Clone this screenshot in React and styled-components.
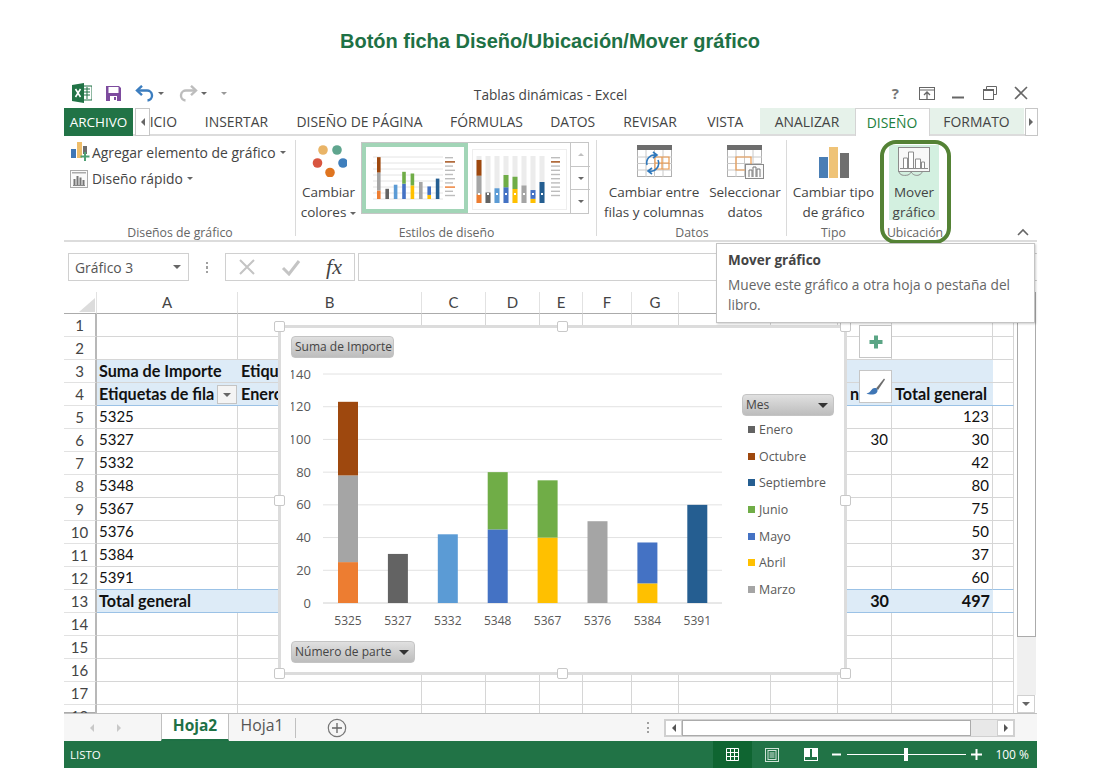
import React from 'react';
import styled, { createGlobalStyle } from 'styled-components';

const GREEN = '#217346';
const UI = '"Open Sans", "Noto Sans", sans-serif';
const CELL = 'Lato, "Open Sans", sans-serif';

const Global = createGlobalStyle`
  html, body { margin: 0; background: #fff; }
  * { box-sizing: border-box; }
`;

const Page = styled.div`
  width: 1100px;
  height: 780px;
  overflow: hidden;
  font-family: ${UI};
  color: #444;
`;
const Heading = styled.h1`
  margin: 0;
  height: 78px;
  padding-top: 28px;
  text-align: center;
  font: bold 20px/26px "Liberation Sans", Arial, sans-serif;
  color: #1e7145;
`;
const Win = styled.div`
  position: relative;
  width: 973px;
  margin-left: 64px;
`;

/* title bar */
const TitleBar = styled.div`
  height: 30px;
  display: flex;
  align-items: center;
  position: relative;
`;
const Quick = styled.div`
  display: flex;
  align-items: center;
  padding-left: 8px;
  flex: 1;
`;
const QuickGap = styled.span`
  width: ${p => p.$w}px;
  flex: none;
`;
const WinTitle = styled.div`
  position: absolute;
  left: 0;
  right: 0;
  top: 7px;
  text-align: center;
  font-size: 13.7px;
  color: #444;
`;
const WinButtons = styled.div`
  display: flex;
  align-items: center;
`;
const WinBtn = styled.div`
  width: 31.5px;
  display: flex;
  justify-content: center;
  align-items: center;
  font-size: 15px;
  font-weight: 700;
  color: #777;
`;

/* tabs */
const TabRow = styled.div`
  height: 28px;
  display: flex;
  border-bottom: 2px solid #dcdcdc;
`;
const Tab = styled.div`
  width: ${p => p.$w}px;
  height: ${p => (p.$active ? 28 : 26)}px;
  flex: none;
  display: flex;
  align-items: center;
  justify-content: center;
  font-size: 13.9px;
  white-space: nowrap;
  color: ${p => (p.$active ? '#1e7f3e' : '#444')};
  background: ${p => (p.$ctx ? '#e6f2ea' : '#fff')};
  position: relative;
  ${p => p.$active && 'border: 1px solid #d4d4d4; border-bottom: 0;'}
`;
const FileTab = styled.div`
  width: 69px;
  height: 28px;
  margin-right: 2px;
  flex: none;
  background: ${GREEN};
  color: #fff;
  font-size: 13.5px;
  display: flex;
  align-items: center;
  justify-content: center;
`;
const TabScroll = styled.div`
  width: ${p => p.$w}px;
  height: 28px;
  flex: none;
  margin-left: ${p => p.$ml || 0}px;
  background: #fff;
  border: 1px solid #c6c6c6;
  display: flex;
  align-items: center;
  justify-content: center;
`;
const Clipped = styled.div`
  width: 40.5px;
  flex: none;
  height: 26px;
  display: flex;
  align-items: center;
  font-size: 13.9px;
  color: #444;
  & > span {
    width: 27px;
    overflow: hidden;
    display: flex;
    justify-content: flex-end;
  }
`;

/* ribbon */
const Ribbon = styled.div`
  height: 106px;
  display: flex;
  border-bottom: 2px solid #dcdcdc;
  position: relative;
`;
const Group = styled.div`
  width: ${p => p.$w}px;
  flex: none;
  display: flex;
  flex-direction: column;
  position: relative;
  padding-top: 4px;
  &::after {
    content: '';
    position: absolute;
    right: 0;
    top: 4px;
    bottom: 4px;
    width: 1px;
    background: ${p => (p.$noline ? 'transparent' : '#dadada')};
  }
`;
const GroupBody = styled.div`
  flex: 1;
  display: flex;
  min-height: 0;
`;
const GroupLabel = styled.div`
  height: 16px;
  flex: none;
  text-align: center;
  font-size: 12.3px;
  line-height: 18px;
  color: #666;
`;
const SmallCmds = styled.div`
  display: flex;
  flex-direction: column;
  gap: 6px;
  padding: 2px 0 0 6px;
`;
const SmallCmd = styled.div`
  display: flex;
  align-items: center;
  gap: 2px;
  height: 20px;
  font-size: 13.9px;
  color: #444;
  white-space: nowrap;
`;
const Caret = styled.span`
  width: 0;
  height: 0;
  border-left: 3px solid transparent;
  border-right: 3px solid transparent;
  border-top: 3px solid #666;
  margin: ${p => p.$m || '0 0 0 4px'};
  display: inline-block;
  vertical-align: middle;
`;
const BigCmd = styled.div`
  width: ${p => p.$w}px;
  flex: none;
  margin-left: ${p => p.$ml || 0}px;
  display: flex;
  flex-direction: column;
  align-items: center;
  ${p => p.$on && 'background: #d3f0e0; height: 75px; margin-top: 5px;'}
`;
const IconSlot = styled.div`
  height: ${p => p.$h || 42}px;
  flex: none;
  display: flex;
  align-items: flex-start;
  justify-content: center;
  padding-top: ${p => p.$pt ?? 5}px;
`;
const BigText = styled.div`
  font-size: 13.5px;
  line-height: 20px;
  text-align: center;
  color: #444;
  white-space: nowrap;
`;
const Gallery = styled.div`
  width: 228px;
  height: 72px;
  margin-top: 2px;
  border: 1px solid #c6c6c6;
  display: flex;
  flex: none;
`;
const GalleryThumb = styled.div`
  width: ${p => p.$w}px;
  flex: none;
  margin-left: ${p => (p.$on ? 0 : 2)}px;
  border: ${p => (p.$on ? '4px solid #a2d5b7' : '2px solid #fff')};
  display: flex;
`;
const GalleryArrows = styled.div`
  margin-left: auto;
  width: 20px;
  flex: none;
  display: flex;
  flex-direction: column;
  border-left: 1px solid #c6c6c6;
`;
const GalleryArrow = styled.div`
  flex: 1;
  display: flex;
  align-items: center;
  justify-content: center;
  border-bottom: ${p => (p.$last ? 0 : '1px solid #c6c6c6')};
`;
const Highlight = styled.div`
  position: absolute;
  left: 0;
  top: 4px;
  width: 71px;
  height: 104px;
  border: 4px solid #548235;
  border-radius: 16px;
  z-index: 3;
  pointer-events: none;
`;
const Collapse = styled.div`
  position: absolute;
  right: 8px;
  bottom: 4px;
`;

/* formula bar */
const FormulaBar = styled.div`
  height: 50px;
  display: flex;
  align-items: flex-start;
  padding: 11px 0 0 4px;
`;
const NameBox = styled.div`
  width: 121px;
  height: 28px;
  border: 1px solid #d0d0d0;
  display: flex;
  align-items: center;
  justify-content: space-between;
  padding: 0 7px 0 6px;
  font-size: 13.9px;
  color: #555;
`;
const GripWrap = styled.div`
  width: 36px;
  height: 28px;
  display: flex;
  align-items: center;
  justify-content: center;
`;
const Grip = styled.span`
  width: 2px;
  height: 11px;
  background: repeating-linear-gradient(#a0a0a0 0 2px, transparent 2px 4.5px);
`;
const FxBox = styled.div`
  width: 130px;
  height: 28px;
  border: 1px solid #d0d0d0;
  display: flex;
  align-items: center;
  justify-content: space-between;
  padding: 0 12px;
`;
const FxGlyph = styled.span`
  font: italic 400 22px/26px "Liberation Serif", serif;
  color: #444;
`;
const FormulaInput = styled.div`
  flex: 1;
  height: 28px;
  margin-left: 3px;
  border: 1px solid #d0d0d0;
  border-right: 0;
`;

/* sheet */
const SheetRow = styled.div`
  height: 421px;
  display: flex;
  position: relative;
  overflow: hidden;
`;
const COLS = '33px 141px 184px 64px 54px 43px 49px 47px 92px 67px 54px 101px 21px';
const Grid = styled.div`
  width: 950px;
  flex: none;
  border-right: 1px solid #ababab;
  border-bottom: 1px solid #ababab;
`;
const Row = styled.div`
  display: grid;
  grid-template-columns: ${COLS};
  height: ${p => p.$h || 23}px;
`;
const ColHead = styled.div`
  border-right: 1px solid #e2e2e2;
  border-bottom: 1px solid #ababab;
  text-align: center;
  font: 15px/21px ${CELL};
  color: #444;
  overflow: hidden;
  position: relative;
`;
const Corner = styled.svg`
  position: absolute;
  right: 1px;
  bottom: 1px;
`;
const RowHead = styled.div`
  border-right: 2px solid #b8b8b8;
  border-bottom: 1px solid #e2e2e2;
  text-align: center;
  font: 15px/22px ${CELL};
  color: #444;
`;
const Cell = styled.div`
  border-right: ${p => (p.$band ? 0 : '1px solid #d6d6d6')};
  border-bottom: 1px solid ${p => (p.$blueline ? '#9bc2e6' : '#d6d6d6')};
  background: ${p => (p.$band ? '#ddebf7' : '#fff')};
  font: ${p => (p.$bold ? 'bold 16.2px' : 'normal 15px')}/21px ${CELL};
  color: #111;
  padding: 0 3px 0 ${p => p.$pl || 2}px;
  text-align: ${p => (p.$right ? 'right' : 'left')};
  white-space: nowrap;
  position: relative;
`;
const FilterBtn = styled.span`
  position: absolute;
  right: 1px;
  top: 2px;
  width: 20px;
  height: 19px;
  background: #f4f4f4;
  border: 1px solid #c4c4c4;
  display: flex;
  align-items: center;
  justify-content: center;
`;
const Chart = styled.div`
  position: absolute;
  left: 214px;
  top: 33px;
  width: 569px;
  height: 350px;
  background: #fff;
  border: 3px solid #dcdcdc;
  padding: 8px 0 0 10px;
  display: flex;
  flex-direction: column;
  align-items: flex-start;
  z-index: 1;
`;
const Handle = styled.span`
  position: absolute;
  width: 11px;
  height: 11px;
  background: #fff;
  border: 1px solid #c8c8c8;
  border-radius: 2px;
  left: calc(${p => p.$x}% + ${p => p.$x * 0.03 - 7}px);
  top: calc(${p => p.$y}% + ${p => p.$y * 0.03 - 7}px);
`;
const FieldBtn = styled.div`
  height: 22px;
  width: ${p => p.$w}px;
  flex: none;
  background: linear-gradient(#e0e0e0, #bdbdbd);
  border: 1px solid #c4c4c4;
  border-radius: 4px;
  font-size: 12px;
  line-height: 20px;
  color: #444;
  padding: 0 5px 0 3px;
  display: flex;
  align-items: center;
  justify-content: space-between;
  white-space: nowrap;
`;
const ChartBody = styled.div`
  width: 100%;
  height: 283px;
  display: flex;
  flex: none;
`;
const Legend = styled.div`
  margin: 36px 0 0 11px;
  width: 92px;
  flex: none;
`;
const LegendList = styled.div`
  padding-left: 6px;
`;
const LegendItem = styled.div`
  height: 26.7px;
  display: flex;
  align-items: center;
  gap: 4px;
  font-size: 12.4px;
  color: #595959;
  white-space: nowrap;
`;
const Swatch = styled.span`
  width: 7px;
  height: 7px;
  background: ${p => p.$c};
  flex: none;
`;
const ChartAction = styled.div`
  position: absolute;
  left: 795px;
  top: ${p => p.$top}px;
  width: 33px;
  height: 33px;
  background: #fff;
  border: 1px solid #c6c6c6;
  display: flex;
  align-items: center;
  justify-content: center;
  z-index: 1;
`;
const VScroll = styled.div`
  width: 23px;
  flex: none;
  display: flex;
  flex-direction: column;
  padding: 0 1px 0 3px;
  background: #fff;
`;
const VTrack = styled.div`
  flex: 1;
  background: #f0f0f0;
`;
const VThumb = styled.div`
  height: 345px;
  background: #fff;
  border: 1px solid #ababab;
`;
const ScrollBtn = styled.div`
  width: ${p => p.$w || 18}px;
  height: ${p => p.$h || 18}px;
  flex: none;
  background: #fff;
  border: 1px solid #d0d0d0;
  display: flex;
  align-items: center;
  justify-content: center;
`;

/* sheet tabs */
const SheetTabs = styled.div`
  height: 28px;
  background: #f6f6f6;
  display: flex;
  align-items: center;
  border-top: 1px solid #c0c0c0;
`;
const TabNav = styled.div`
  width: 97px;
  flex: none;
  display: flex;
  gap: 23px;
  padding-left: 26px;
`;
const SheetTab = styled.div`
  width: ${p => p.$w}px;
  height: 27px;
  flex: none;
  align-self: flex-start;
  text-align: center;
  font-size: ${p => (p.$on ? 15.5 : 15.8)}px;
  line-height: 23px;
  font-weight: ${p => (p.$on ? 700 : 400)};
  color: ${p => (p.$on ? '#1e7145' : '#555')};
  background: ${p => (p.$on ? '#fff' : 'transparent')};
  border-bottom: ${p => (p.$on ? '2px solid #1e7145' : 0)};
  border-right: ${p => (p.$on ? '1px solid #c0c0c0' : 0)};
  border-left: ${p => (p.$on ? '1px solid #c0c0c0' : 0)};
`;
const TabDivider = styled.div`
  width: 1px;
  height: 20px;
  background: #c0c0c0;
  flex: none;
`;
const NewSheet = styled.div`
  margin-left: 31px;
  display: flex;
`;
const SplitGrip = styled.div`
  margin-left: 300px;
  width: 17px;
  height: 11px;
  display: flex;
`;
const HScroll = styled.div`
  width: 351px;
  height: 18px;
  flex: none;
  display: flex;
  background: #e8e8e8;
  border: 1px solid #d0d0d0;
`;
const HThumb = styled.div`
  width: 289px;
  flex: none;
  background: #fff;
  border: 1px solid #ababab;
`;
const HSpace = styled.span`
  flex: 1;
`;

/* status */
const Status = styled.div`
  height: 27px;
  background: ${GREEN};
  color: #fff;
  display: flex;
  align-items: center;
  font-size: 11.5px;
  padding-left: 6px;
`;
const ViewBtns = styled.div`
  margin-left: auto;
  display: flex;
  align-self: stretch;
`;
const ViewBtn = styled.div`
  width: 39px;
  background: ${p => (p.$on ? '#0f6531' : 'transparent')};
  display: flex;
  align-items: center;
  justify-content: center;
`;
const Zoom = styled.div`
  display: flex;
  align-items: center;
  margin-left: 2px;
`;
const ZoomTrack = styled.div`
  width: 119px;
  height: 1px;
  background: #fff;
  margin: 0 5px;
  position: relative;
`;
const ZoomThumb = styled.span`
  position: absolute;
  left: 57px;
  top: -6px;
  width: 4px;
  height: 13px;
  background: #fff;
`;
const ZoomLabel = styled.div`
  width: 55px;
  text-align: right;
  padding-right: 8px;
  font-size: 12px;
`;

/* tooltip */
const Tip = styled.div`
  position: absolute;
  left: 652px;
  top: 165px;
  width: 319px;
  height: 80px;
  background: #fff;
  border: 1px solid #c4c4c4;
  box-shadow: 1px 1px 2px rgba(0, 0, 0, 0.2);
  padding: 6px 11px;
  z-index: 4;
`;
const TipTitle = styled.div`
  font-size: 13.5px;
  font-weight: 700;
  line-height: 20px;
  color: #444;
`;
const TipText = styled.div`
  margin-top: 5px;
  font-size: 13.7px;
  line-height: 20px;
  color: #666;
`;

/* data */
const SERIES = {
  ene: '#636363', oct: '#9e480e', sep: '#255e91', jun: '#70ad47',
  may: '#4472c4', abr: '#ffc000', mar: '#a5a5a5', feb: '#ed7d31', azul: '#5b9bd5',
};
const BARS = [
  { label: '5325', parts: [['feb', 25], ['mar', 53], ['oct', 45]] },
  { label: '5327', parts: [['ene', 30]] },
  { label: '5332', parts: [['azul', 42]] },
  { label: '5348', parts: [['may', 45], ['jun', 35]] },
  { label: '5367', parts: [['abr', 40], ['jun', 35]] },
  { label: '5376', parts: [['mar', 50]] },
  { label: '5384', parts: [['abr', 12], ['may', 25]] },
  { label: '5391', parts: [['sep', 60]] },
];
const LEGEND = [
  ['Enero', 'ene'], ['Octubre', 'oct'], ['Septiembre', 'sep'], ['Junio', 'jun'],
  ['Mayo', 'may'], ['Abril', 'abr'], ['Marzo', 'mar'],
];
// the letters after G sit under the tooltip
const LETTERS = ['', 'A', 'B', 'C', 'D', 'E', 'F', 'G', '', '', '', '', ''];
const TOTALS = { 5: '123', 6: '30', 7: '42', 8: '80', 9: '75', 10: '50', 11: '37', 12: '60', 13: '497' };
const PARTS = { 5: '5325', 6: '5327', 7: '5332', 8: '5348', 9: '5367', 10: '5376', 11: '5384', 12: '5391' };

const stack = (parts, base, scale, x, w) => {
  let v = 0;
  return parts.map(([key, n]) => {
    const y = base - (v + n) * scale;
    v += n;
    return <rect key={key + v} x={x} y={y} width={w} height={n * scale} fill={SERIES[key]} />;
  });
};

const PlotArea = () => {
  const base = 245;
  const k = 229 / 140;
  return (
    <svg width="440" height="283" style={{ flex: 'none', display: 'block' }}>
      {[0, 20, 40, 60, 80, 100, 120, 140].map(v => (
        <g key={v}>
          <line x1="32" x2="431" y1={base - v * k} y2={base - v * k} stroke={v ? '#e2e2e2' : '#d0d0d0'} />
          <text x="20" y={base - v * k + 4.5} textAnchor="end" fontSize="13" fill="#595959" fontFamily={UI}>{v}</text>
        </g>
      ))}
      {BARS.map((b, i) => {
        const cx = 57 + i * 49.9;
        return (
          <g key={b.label}>
            {stack(b.parts, base, k, cx - 10, 20)}
            <text x={cx} y={267} textAnchor="middle" fontSize="12" fill="#595959" fontFamily={UI}>{b.label}</text>
          </g>
        );
      })}
    </svg>
  );
};

const MiniChartA = () => (
  <svg width="97" height="64" style={{ display: 'block' }}>
    {[0, 1, 2, 3, 4, 5, 6, 7].map(i => (
      <line key={i} x1="7" x2="77" y1={52 - i * 6} y2={52 - i * 6} stroke="#e4e4e4" strokeWidth="1" />
    ))}
    {BARS.map((b, i) => <g key={b.label}>{stack(b.parts, 52, 0.34, 11 + i * 8.4, 3.6)}</g>)}
    {[0, 1, 2, 3, 4, 5, 6, 7, 8, 9].map(i => (
      <rect key={i} x="79" y={10 + i * 4.2} width={i % 2 ? 10 : 8} height="1.4" fill={i === 1 ? '#9e480e' : i === 7 ? '#ed7d31' : '#bdbdbd'} />
    ))}
  </svg>
);

const MiniChartB = () => (
  <svg width="96" height="66" style={{ display: 'block' }}>
    <rect x="0.5" y="4.5" width="94" height="60" fill="none" stroke="#eee" />
    {BARS.map((b, i) => (
      <g key={b.label}>
        <rect x={4.5 + i * 9} y="11" width="5" height="47" fill="#ececec" />
        {stack(b.parts, 58, 0.35, 4.5 + i * 9, 5)}
        <rect x={6 + i * 9} y="48" width="2" height="2" fill="#fff" />
      </g>
    ))}
    {[0, 1, 2, 3, 4, 5, 6, 7, 8, 9].map(i => (
      <rect key={i} x="79" y={12 + i * 4.2} width="9" height="1.4" fill={i === 1 ? '#9e480e' : '#bdbdbd'} />
    ))}
  </svg>
);

/* icons */
const ExcelIcon = () => (
  <svg width="20" height="20" viewBox="0 0 20 20">
    <rect x="10" y="3" width="10" height="14" fill="#fff" stroke="#217346" />
    <path d="M12 6h6M12 9h6M12 12h6M15 4v12" stroke="#217346" />
    <path d="M0 2l12-2v20L0 18z" fill="#217346" />
    <path d="M3.5 6l5 8M8.5 6l-5 8" stroke="#fff" strokeWidth="1.6" />
  </svg>
);
const SaveIcon = () => (
  <svg width="17" height="17" viewBox="0 0 17 17">
    <path d="M1 1h13l2 2v13H1z" fill="#7d4b9e" />
    <rect x="3.5" y="2" width="10" height="6" fill="#fff" />
    <rect x="5" y="11" width="7" height="5" fill="#fff" />
    <rect x="9" y="12" width="2" height="3" fill="#7d4b9e" />
  </svg>
);
const UndoIcon = ({ c }) => (
  <svg width="20" height="17" viewBox="0 0 20 17" fill="none">
    <path d="M2.5 5.5h9a5 5 0 0 1 1 10" stroke={c} strokeWidth="2.4" />
    <path d="M7 0.8L2 5.5l5 4.7" stroke={c} strokeWidth="2.4" />
  </svg>
);
const RedoIcon = ({ c }) => (
  <svg width="20" height="17" viewBox="0 0 20 17" fill="none">
    <path d="M17.5 5.5h-9a5 5 0 0 0-1 10" stroke={c} strokeWidth="2.4" />
    <path d="M13 0.8l5 4.7-5 4.7" stroke={c} strokeWidth="2.4" />
  </svg>
);
const Tri = ({ dir = 'down', c = '#666', s = 4 }) => {
  const pts = {
    down: `0,0 ${s * 2},0 ${s},${s}`,
    up: `0,${s} ${s * 2},${s} ${s},0`,
    left: `${s},0 ${s},${s * 2} 0,${s}`,
    right: `0,0 0,${s * 2} ${s},${s}`,
  }[dir];
  const horiz = dir === 'left' || dir === 'right';
  return (
    <svg width={horiz ? s : s * 2} height={horiz ? s * 2 : s} style={{ display: 'block', flex: 'none' }}>
      <polygon points={pts} fill={c} />
    </svg>
  );
};
const AddElementIcon = () => (
  <svg width="20" height="20" viewBox="0 0 20 20" style={{ flex: 'none', marginTop: -3 }}>
    <rect x="1" y="8" width="5" height="9" fill="#3f76b5" />
    <rect x="7" y="1" width="5" height="16" fill="#eebd6b" />
    <rect x="13" y="5" width="4" height="8" fill="#6d6d6d" />
    <path d="M15 11v9M10.5 15.5h9" stroke="#4ea072" strokeWidth="2" />
  </svg>
);
const LayoutIcon = () => (
  <svg width="18" height="19" viewBox="0 0 18 19" style={{ flex: 'none', marginRight: 2 }}>
    <rect x="0.5" y="1.5" width="17" height="17" fill="#fafafa" stroke="#aaa" />
    <rect x="2" y="3" width="14" height="1.5" fill="#aaa" />
    <path d="M4.5 16V10M7.5 16V7M10.5 16V8.5M13.5 16V11" stroke="#777" strokeWidth="2" />
    <path d="M3 16.5h12" stroke="#888" />
  </svg>
);
const PaletteIcon = () => (
  <svg width="36" height="36" viewBox="0 0 36 36">
    <circle cx="12" cy="9" r="4.8" fill="#e9b467" />
    <circle cx="26" cy="9" r="4.8" fill="#5fa58e" />
    <circle cx="6.5" cy="22" r="4.8" fill="#d8553f" />
    <circle cx="32" cy="22" r="4.8" fill="#3f7fbd" />
    <circle cx="19" cy="31.5" r="4.8" fill="#df7520" />
  </svg>
);
const TableBase = () => (
  <g>
    <rect x="0.5" y="0.5" width="34" height="31" fill="#fff" stroke="#b0b0b0" />
    <rect x="0" y="0" width="35" height="5" fill="#6d6d6d" />
    <path d="M0 12h35M0 18.5h35M0 25h35M9 5v27M17.5 5v27M26 5v27" stroke="#c8c8c8" />
  </g>
);
const SwitchIcon = () => (
  <svg width="35" height="32" viewBox="0 0 35 32">
    <TableBase />
    <path d="M18 12h14v12H18z M18 18h14 M25 12v12" fill="none" stroke="#eb9a4f" strokeWidth="1.2" />
    <path d="M10 20a8 8 0 0 1 9-10M16 7l4 3-4 3" fill="none" stroke="#2f78bc" strokeWidth="1.6" />
    <path d="M21 15a8 8 0 0 1-9 11M15 29l-4-3 4-3" fill="none" stroke="#2f78bc" strokeWidth="1.6" />
  </svg>
);
const SelectIcon = () => (
  <svg width="37" height="34" viewBox="0 0 37 34">
    <TableBase />
    <path d="M9 12h15v13H9z" fill="none" stroke="#eb9a4f" strokeWidth="1.2" />
    <rect x="18.5" y="19.5" width="18" height="14" fill="#fafafa" stroke="#8a8a8a" />
    <path d="M22 32v-7h3v7M26 32v-10h3v10M30 32v-8h3v8" fill="#fff" stroke="#777" />
  </svg>
);
const ChartTypeIcon = () => (
  <svg width="30" height="32" viewBox="0 0 30 32">
    <rect x="0" y="11" width="9" height="21" fill="#4a7eb5" />
    <rect x="10" y="1" width="9" height="31" fill="#efc377" />
    <rect x="21" y="7" width="9" height="25" fill="#6f6f6f" />
  </svg>
);
const MoveChartIcon = () => (
  <svg width="34" height="30" viewBox="0 0 34 30">
    <rect x="1.5" y="0.5" width="31" height="24" fill="#f8f8f8" stroke="#8c8c8c" />
    <path d="M6.5 21V11h4v10M11.5 21V5h5v16M18.5 21v-9h5v9M24.5 21v-6h3v6" fill="#fff" stroke="#8c8c8c" />
    <path d="M3 21.5h28" stroke="#8c8c8c" />
    <path d="M2 25c1 3 4 4 9 3 2-1 3-2 3-3M14 25c2 3 5 4 8 3 2-1 3-2 3-3" fill="none" stroke="#8c8c8c" />
  </svg>
);
const BrushIcon = () => (
  <svg width="20" height="20" viewBox="0 0 20 20">
    <path d="M10 11.5L18 1.5l1 1-7 10.5z" fill="#6d6d6d" />
    <path d="M10 11c-3-.5-4 1-5 2.5-1 1.500-2.500 2.500-4.500 3 3 1.500 8 1.500 10-.5 1.500-1.500 1.500-3.500-.5-5z" fill="#3f76b5" />
  </svg>
);
const PlusIcon = () => (
  <svg width="16" height="16" viewBox="0 0 16 16">
    <path d="M8 1.5v13M1.5 8h13" stroke="#5ba585" strokeWidth="4" />
  </svg>
);
const CancelIcon = ({ c }) => (
  <svg width="18" height="18" viewBox="0 0 18 18"><path d="M2 2l14 14M16 2L2 16" stroke={c} strokeWidth="2" /></svg>
);
const CheckIcon = ({ c }) => (
  <svg width="20" height="18" viewBox="0 0 20 18" fill="none"><path d="M2 10l6 6L18 3" stroke={c} strokeWidth="3" /></svg>
);
const NewSheetIcon = () => (
  <svg width="20" height="20" viewBox="0 0 20 20" fill="none">
    <circle cx="10" cy="10" r="8.7" stroke="#777" strokeWidth="1.2" />
    <path d="M10 5v10M5 10h10" stroke="#666" strokeWidth="1.3" />
  </svg>
);
const NormalView = () => (
  <svg width="13" height="13" viewBox="0 0 13 13" fill="none" stroke="#fff">
    <path d="M0.5 0.5h12v12h-12zM4.5 0.5v12M8.5 0.5v12M0.5 4.5h12M0.5 8.5h12" />
  </svg>
);
const PageView = () => (
  <svg width="14" height="14" viewBox="0 0 14 14" fill="none" stroke="#cfe3d7">
    <rect x="0.5" y="0.5" width="13" height="13" />
    <rect x="3" y="2.5" width="8" height="9" />
    <path d="M4.5 5h5M4.5 7h5M4.5 9h5" />
  </svg>
);
const BreakView = () => (
  <svg width="14" height="13" viewBox="0 0 14 13">
    <rect x="0.5" y="0.5" width="13" height="12" fill="none" stroke="#fff" />
    <rect x="1" y="1" width="5" height="8" fill="#fff" />
    <rect x="8" y="1" width="5" height="8" fill="#fff" />
  </svg>
);

const renderCell = (row, col) => {
  const band = (row === 3 || row === 4 || row === 13) && col <= 11;
  const props = { $band: band, $blueline: row === 4 || row === 12 || row === 13 };
  const bold = { ...props, $bold: true };
  if (col === 1) {
    if (row === 3) return <Cell key={col} {...bold}>Suma de Importe</Cell>;
    if (row === 4) return <Cell key={col} {...bold}>Etiquetas de fila<FilterBtn><Tri s={4} /></FilterBtn></Cell>;
    if (row === 13) return <Cell key={col} {...bold}>Total general</Cell>;
    return <Cell key={col} {...props}>{PARTS[row]}</Cell>;
  }
  if (col === 2 && row === 3) return <Cell key={col} {...bold} $pl={3}>Etiquetas de columna</Cell>;
  if (col === 2 && row === 4) return <Cell key={col} {...bold} $pl={3}>Enero</Cell>;
  if (col === 10 && row === 4) return <Cell key={col} {...bold} $pl={12}>n</Cell>;
  if (col === 10 && row === 6) return <Cell key={col} {...props} $right>30</Cell>;
  if (col === 10 && row === 13) return <Cell key={col} {...bold} $right>30</Cell>;
  if (col === 11 && row === 4) return <Cell key={col} {...bold} $pl={3}>Total general</Cell>;
  if (col === 11 && TOTALS[row]) return <Cell key={col} {...(row === 13 ? bold : props)} $right>{TOTALS[row]}</Cell>;
  return <Cell key={col} {...props} />;
};

const App = () => {
  const rows = Array.from({ length: 18 }, (_, i) => i + 1);
  const cols = [1, 2, 3, 4, 5, 6, 7, 8, 9, 10, 11, 12];
  return (
    <Page>
      <Global />
      <Heading>Botón ficha Diseño/Ubicación/Mover gráfico</Heading>
      <Win>
        <TitleBar>
          <Quick>
            <ExcelIcon />
            <QuickGap $w={13} />
            <SaveIcon />
            <QuickGap $w={13} />
            <UndoIcon c="#3b7dbf" />
            <Caret $m="0 0 0 3px" />
            <QuickGap $w={14} />
            <RedoIcon c="#bdbdbd" />
            <Caret $m="0 0 0 3px" />
            <QuickGap $w={14} />
            <Tri s={3} c="#999" />
          </Quick>
          <WinTitle>Tablas dinámicas - Excel</WinTitle>
          <WinButtons>
            <WinBtn>?</WinBtn>
            <WinBtn>
              <svg width="16" height="13" viewBox="0 0 16 13" fill="none">
                <rect x="0.5" y="0.5" width="15" height="12" stroke="#666" />
                <path d="M1 3h14" stroke="#666" />
                <path d="M8 12V5M5 8l3-3 3 3" stroke="#666" strokeWidth="1.3" />
              </svg>
            </WinBtn>
            <WinBtn>
              <svg width="12" height="13" viewBox="0 0 12 13"><path d="M0 10.500h12" stroke="#666" strokeWidth="2" /></svg>
            </WinBtn>
            <WinBtn>
              <svg width="14" height="14" viewBox="0 0 14 14" fill="none">
                <path d="M3.5 3.5V0.5h10v8h-3" stroke="#666" />
                <rect x="0.5" y="3.5" width="10" height="10" stroke="#666" />
                <path d="M1 4.500h9" stroke="#666" />
              </svg>
            </WinBtn>
            <WinBtn>
              <svg width="14" height="14" viewBox="0 0 14 14"><path d="M1 1l12 12M13 1L1 13" stroke="#666" strokeWidth="1.6" /></svg>
            </WinBtn>
          </WinButtons>
        </TitleBar>

        <TabRow>
          <FileTab>ARCHIVO</FileTab>
          <TabScroll $w={15}><Tri dir="left" /></TabScroll>
          <Clipped><span>INICIO</span></Clipped>
          <Tab $w={92}>INSERTAR</Tab>
          <Tab $w={154}>DISEÑO DE PÁGINA</Tab>
          <Tab $w={100}>FÓRMULAS</Tab>
          <Tab $w={72.5}>DATOS</Tab>
          <Tab $w={82}>REVISAR</Tab>
          <Tab $w={68.5}>VISTA</Tab>
          <Tab $w={95} $ctx>ANALIZAR</Tab>
          <Tab $w={75} $active>DISEÑO</Tab>
          <Tab $w={94} $ctx>FORMATO</Tab>
          <TabScroll $w={13} $ml={1}><Tri dir="right" /></TabScroll>
        </TabRow>

        <Ribbon>
          <Group $w={232}>
            <GroupBody>
              <SmallCmds>
                <SmallCmd><AddElementIcon />Agregar elemento de gráfico<Caret $m="0 0 0 2px" /></SmallCmd>
                <SmallCmd><LayoutIcon />Diseño rápido<Caret $m="0 0 0 2px" /></SmallCmd>
              </SmallCmds>
            </GroupBody>
            <GroupLabel>Diseños de gráfico</GroupLabel>
          </Group>
          <Group $w={301}>
            <GroupBody>
              <BigCmd $w={65}>
                <IconSlot $pt={1}><PaletteIcon /></IconSlot>
                <BigText>Cambiar<br />colores<Caret /></BigText>
              </BigCmd>
              <Gallery>
                <GalleryThumb $on $w={106}><MiniChartA /></GalleryThumb>
                <GalleryThumb $w={100}><MiniChartB /></GalleryThumb>
                <GalleryArrows>
                  <GalleryArrow><Tri dir="up" s={3} c="#c0c0c0" /></GalleryArrow>
                  <GalleryArrow><Tri s={3} /></GalleryArrow>
                  <GalleryArrow $last><Tri s={3} /></GalleryArrow>
                </GalleryArrows>
              </Gallery>
            </GroupBody>
            <GroupLabel>Estilos de diseño</GroupLabel>
          </Group>
          <Group $w={190}>
            <GroupBody>
              <BigCmd $w={106} $ml={4}>
                <IconSlot><SwitchIcon /></IconSlot>
                <BigText>Cambiar entre<br />filas y columnas</BigText>
              </BigCmd>
              <BigCmd $w={76}>
                <IconSlot><SelectIcon /></IconSlot>
                <BigText>Seleccionar<br />datos</BigText>
              </BigCmd>
            </GroupBody>
            <GroupLabel>Datos</GroupLabel>
          </Group>
          <Group $w={93} $noline>
            <GroupBody>
              <BigCmd $w={93}>
                <IconSlot $pt={6}><ChartTypeIcon /></IconSlot>
                <BigText>Cambiar tipo<br />de gráfico</BigText>
              </BigCmd>
            </GroupBody>
            <GroupLabel>Tipo</GroupLabel>
          </Group>
          <Group $w={70} $noline>
            <GroupBody>
              <BigCmd $w={50} $ml={9} $on>
                <IconSlot $pt={2} $h={37}><MoveChartIcon /></IconSlot>
                <BigText>Mover<br />gráfico</BigText>
              </BigCmd>
            </GroupBody>
            <GroupLabel>Ubicación</GroupLabel>
            <Highlight />
          </Group>
          <Collapse>
            <svg width="12" height="8" viewBox="0 0 12 8" fill="none" style={{ display: 'block' }}>
              <path d="M1 7l5-5 5 5" stroke="#666" strokeWidth="1.6" />
            </svg>
          </Collapse>
        </Ribbon>

        <FormulaBar>
          <NameBox>Gráfico 3<Tri s={4} /></NameBox>
          <GripWrap><Grip /></GripWrap>
          <FxBox>
            <CancelIcon c="#c4c4c4" />
            <CheckIcon c="#c4c4c4" />
            <FxGlyph>fx</FxGlyph>
          </FxBox>
          <FormulaInput />
        </FormulaBar>

        <SheetRow>
          <Grid>
            <Row $h={22}>
              {LETTERS.map((l, i) => (
                <ColHead key={i}>
                  {i === 0
                    ? <Corner width="16" height="14"><polygon points="16,0 16,14 0,14" fill="#dcdcdc" /></Corner>
                    : l}
                </ColHead>
              ))}
            </Row>
            {rows.map(r => (
              <Row key={r}>
                <RowHead>{r}</RowHead>
                {cols.map(c => renderCell(r, c))}
              </Row>
            ))}
          </Grid>
          <VScroll>
            <VTrack><VThumb /></VTrack>
            <ScrollBtn $h={18}><Tri s={4} /></ScrollBtn>
          </VScroll>

          <Chart>
            {[[0, 0], [50, 0], [100, 0], [0, 50], [100, 50], [0, 100], [50, 100], [100, 100]].map(([x, y]) => (
              <Handle key={`${x}-${y}`} $x={x} $y={y} />
            ))}
            <FieldBtn $w={103}>Suma de Importe</FieldBtn>
            <ChartBody>
              <PlotArea />
              <Legend>
                <FieldBtn $w={92}>Mes<Tri s={5} c="#333" /></FieldBtn>
                <LegendList>
                  {LEGEND.map(([name, key]) => (
                    <LegendItem key={key}><Swatch $c={SERIES[key]} />{name}</LegendItem>
                  ))}
                </LegendList>
              </Legend>
            </ChartBody>
            <FieldBtn $w={124}>Número de parte<Tri s={5} c="#333" /></FieldBtn>
          </Chart>
          <ChartAction $top={33}><PlusIcon /></ChartAction>
          <ChartAction $top={78}><BrushIcon /></ChartAction>
        </SheetRow>

        <SheetTabs>
          <TabNav><Tri dir="left" c="#c8c8c8" s={4} /><Tri dir="right" c="#c8c8c8" s={4} /></TabNav>
          <SheetTab $on $w={68}>Hoja2</SheetTab>
          <SheetTab $w={66}>Hoja1</SheetTab>
          <TabDivider />
          <NewSheet><NewSheetIcon /></NewSheet>
          <SplitGrip><Grip /></SplitGrip>
          <HScroll>
            <ScrollBtn $w={17} $h={16}><Tri dir="left" c="#555" /></ScrollBtn>
            <HThumb />
            <HSpace />
            <ScrollBtn $w={17} $h={16}><Tri dir="right" c="#555" /></ScrollBtn>
          </HScroll>
        </SheetTabs>

        <Status>
          LISTO
          <ViewBtns>
            <ViewBtn $on><NormalView /></ViewBtn>
            <ViewBtn><PageView /></ViewBtn>
            <ViewBtn><BreakView /></ViewBtn>
          </ViewBtns>
          <Zoom>
            <svg width="10" height="3"><rect width="9" height="2" y="0.5" fill="#fff" /></svg>
            <ZoomTrack><ZoomThumb /></ZoomTrack>
            <svg width="11" height="11"><path d="M5.5 0v11M0 5.5h11" stroke="#fff" strokeWidth="2" /></svg>
          </Zoom>
          <ZoomLabel>100 %</ZoomLabel>
        </Status>

        <Tip>
          <TipTitle>Mover gráfico</TipTitle>
          <TipText>Mueve este gráfico a otra hoja o pestaña del libro.</TipText>
        </Tip>
      </Win>
    </Page>
  );
};

export default App;
